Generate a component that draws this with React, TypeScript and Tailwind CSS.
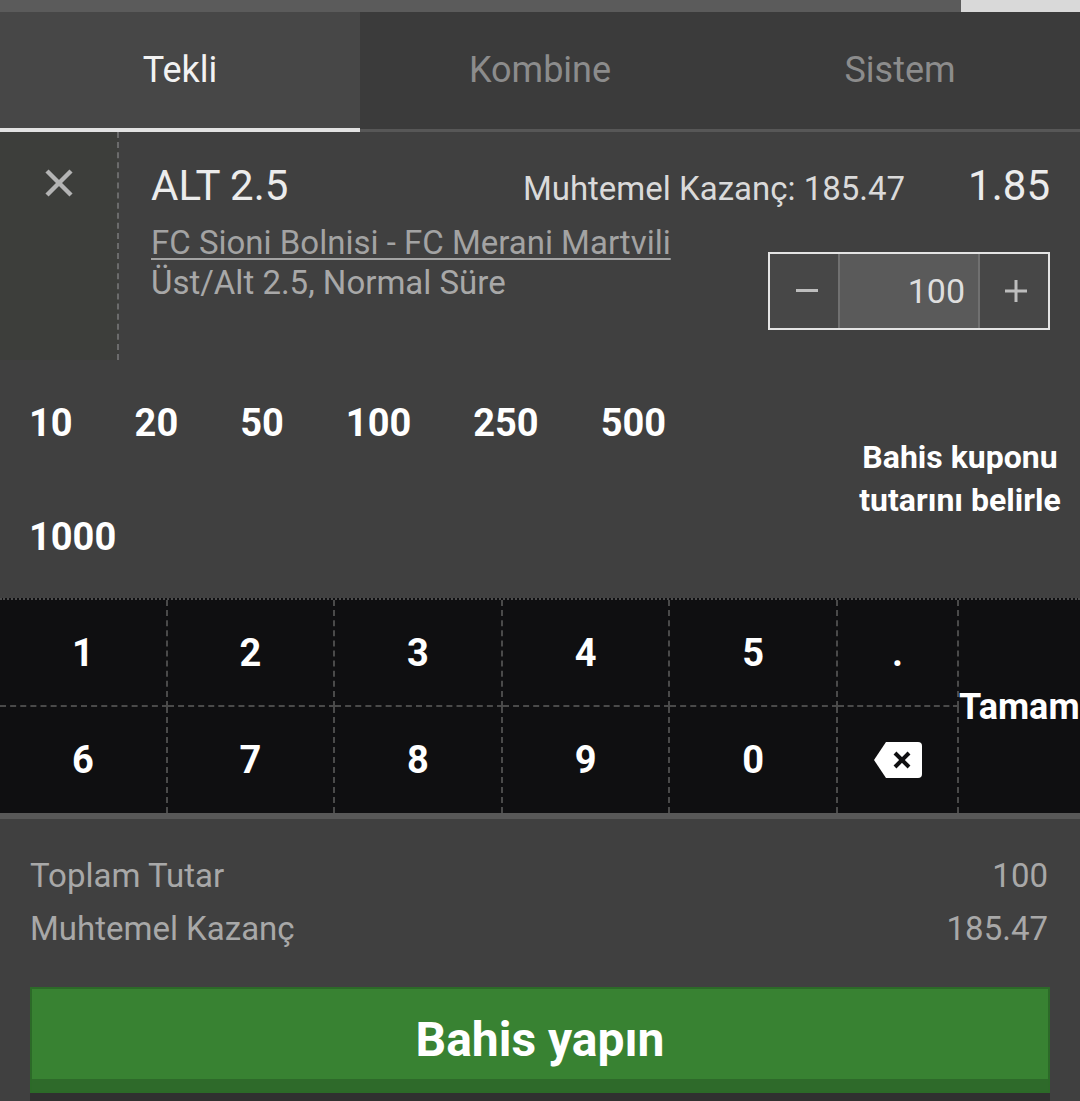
import React from "react";

const amounts = ["10", "20", "50", "100", "250", "500", "1000"];

function XIcon() {
  return (
    <svg width="30" height="30" viewBox="0 0 30 30">
      <line x1="3" y1="3" x2="27" y2="27" stroke="#b4b4b4" strokeWidth="4.5" />
      <line x1="27" y1="3" x2="3" y2="27" stroke="#b4b4b4" strokeWidth="4.5" />
    </svg>
  );
}

function Backspace() {
  return (
    <svg width="48" height="36" viewBox="0 0 48 36">
      <path d="M12 0 H44 a4 4 0 0 1 4 4 V32 a4 4 0 0 1 -4 4 H12 L0 18 Z" fill="#ffffff" />
      <line x1="21" y1="11" x2="35" y2="25" stroke="#0f0f11" strokeWidth="4" />
      <line x1="35" y1="11" x2="21" y2="25" stroke="#0f0f11" strokeWidth="4" />
    </svg>
  );
}

function KeyCell({ children, bottom }: { children: React.ReactNode; bottom?: boolean }) {
  return (
    <div
      className={
        bottom
          ? "flex items-center justify-center border-r-2 border-dashed border-[#4a4a4a] text-[38px] font-bold leading-none text-white"
          : "flex items-center justify-center border-r-2 border-b-2 border-dashed border-[#4a4a4a] text-[38px] font-bold leading-none text-white"
      }
    >
      {children}
    </div>
  );
}

export default function App() {
  return (
    <div className="w-[1080px] h-[1101px] overflow-hidden bg-[#404040] font-['Roboto',sans-serif]">
      {/* top bar */}
      <div className="flex h-[12px] bg-[#5b5b5b]">
        <div className="ml-auto w-[119px] bg-[#d9d9d9]" />
      </div>

      {/* tabs */}
      <div className="flex h-[116px]">
        <div className="flex w-[360px] items-center justify-center bg-[#474747] text-[36px] text-[#f2f2f2]">Tekli</div>
        <div className="flex w-[360px] items-center justify-center bg-[#3b3b3b] text-[36px] text-[#8c8c8c]">Kombine</div>
        <div className="flex w-[360px] items-center justify-center bg-[#3b3b3b] text-[36px] text-[#8c8c8c]">Sistem</div>
      </div>
      <div className="flex h-[4px] bg-[#3b3b3b]">
        <div className="w-[360px] bg-[#e2e2e2]" />
        <div className="mt-[1px] flex-1 bg-[#575757]" />
      </div>

      {/* bet row */}
      <div className="flex h-[228px]">
        <div className="flex w-[119px] shrink-0 justify-center border-r-2 border-dashed border-[#6b6b6b] bg-[#3d3e3b] pt-[36px]">
          <div className="h-[30px]">
            <XIcon />
          </div>
        </div>
        <div className="flex-1 pl-[32px] pr-[30px] pt-[29px]">
          <div className="flex items-baseline">
            <span className="text-[42px] leading-[50px] text-[#ececec]">ALT 2.5</span>
            <span className="ml-auto text-[33px] leading-[40px] text-[#dadada]">Muhtemel Kazanç: 185.47</span>
            <span className="ml-[63px] text-[42px] leading-[50px] text-[#ececec]">1.85</span>
          </div>
          <div className="mt-[12px] flex justify-between">
            <div>
              <div className="text-[33px] leading-[40px] text-[#a3a3a3] underline decoration-2 underline-offset-[4px]">
                FC Sioni Bolnisi - FC Merani Martvili
              </div>
              <div className="text-[33px] leading-[40px] text-[#a8a8a8]">Üst/Alt 2.5, Normal Süre</div>
            </div>
            <div className="mt-[29px] flex h-[78px] shrink-0 border-2 border-[#e4e4e4]">
              <div className="flex w-[70px] items-center justify-center border-r-2 border-[#707070] bg-[#474747] pl-[6px]">
                <svg width="24" height="4" viewBox="0 0 24 4">
                  <rect x="1" y="0" width="22" height="3" fill="#bdbdbd" />
                </svg>
              </div>
              <div className="flex w-[140px] items-center justify-end border-r-2 border-[#707070] bg-[#5a5a5a] pr-[13px] text-[34px] leading-none text-[#dedede]">
                100
              </div>
              <div className="flex w-[68px] items-center justify-center bg-[#474747] pl-[4px]">
                <svg width="22" height="22" viewBox="0 0 22 22">
                  <rect x="0" y="9.5" width="22" height="3" fill="#bdbdbd" />
                  <rect x="9.5" y="0" width="3" height="22" fill="#bdbdbd" />
                </svg>
              </div>
            </div>
          </div>
        </div>
      </div>

      {/* quick amounts */}
      <div className="flex h-[238px] justify-between pt-[6px]">
        <div className="flex w-[800px] flex-wrap content-start">
          {amounts.map((a) => (
            <div key={a} className="flex h-[114px] items-center pl-[29px] pr-[33px] text-[38px] font-bold leading-none text-white">
              {a}
            </div>
          ))}
        </div>
        <div className="-mt-[6px] flex w-[240px] items-center justify-center text-center text-[32px] font-bold leading-[43px] text-white whitespace-nowrap">
          Bahis kuponu
          <br />
          tutarını belirle
        </div>
      </div>

      {/* keypad */}
      <div className="grid grid-cols-[repeat(5,1fr)_121px_121px] grid-rows-[107px_106px] border-t-2 border-dotted border-[#4d4d4d] bg-[#0f0f11]">
        <KeyCell>1</KeyCell>
        <KeyCell>2</KeyCell>
        <KeyCell>3</KeyCell>
        <KeyCell>4</KeyCell>
        <KeyCell>5</KeyCell>
        <KeyCell>.</KeyCell>
        <div className="row-span-2 flex items-center overflow-hidden whitespace-nowrap text-[36px] font-bold leading-none text-white">
          Tamam
        </div>
        <KeyCell bottom>6</KeyCell>
        <KeyCell bottom>7</KeyCell>
        <KeyCell bottom>8</KeyCell>
        <KeyCell bottom>9</KeyCell>
        <KeyCell bottom>0</KeyCell>
        <KeyCell bottom>
          <Backspace />
        </KeyCell>
      </div>
      <div className="h-[6px] bg-[#585858]" />

      {/* summary */}
      <div className="pl-[30px] pr-[32px] pt-[30px]">
        <div className="flex justify-between text-[33px] leading-[53px] text-[#a8a8a8]">
          <span>Toplam Tutar</span>
          <span>100</span>
        </div>
        <div className="flex justify-between text-[33px] leading-[53px] text-[#a8a8a8]">
          <span>Muhtemel Kazanç</span>
          <span>185.47</span>
        </div>
      </div>

      {/* button */}
      <div className="mx-[30px] mt-[32px] flex h-[106px] flex-col border-2 border-[#2c6a28] bg-[#388232]">
        <div className="flex flex-1 items-center justify-center pt-[12px] text-[48px] font-bold leading-none text-white">
          Bahis yapın
        </div>
        <div className="h-[12px] bg-[#2e6a2a]" />
      </div>
      <div className="mx-[30px] h-[8px] bg-[#303030]" />
    </div>
  );
}
